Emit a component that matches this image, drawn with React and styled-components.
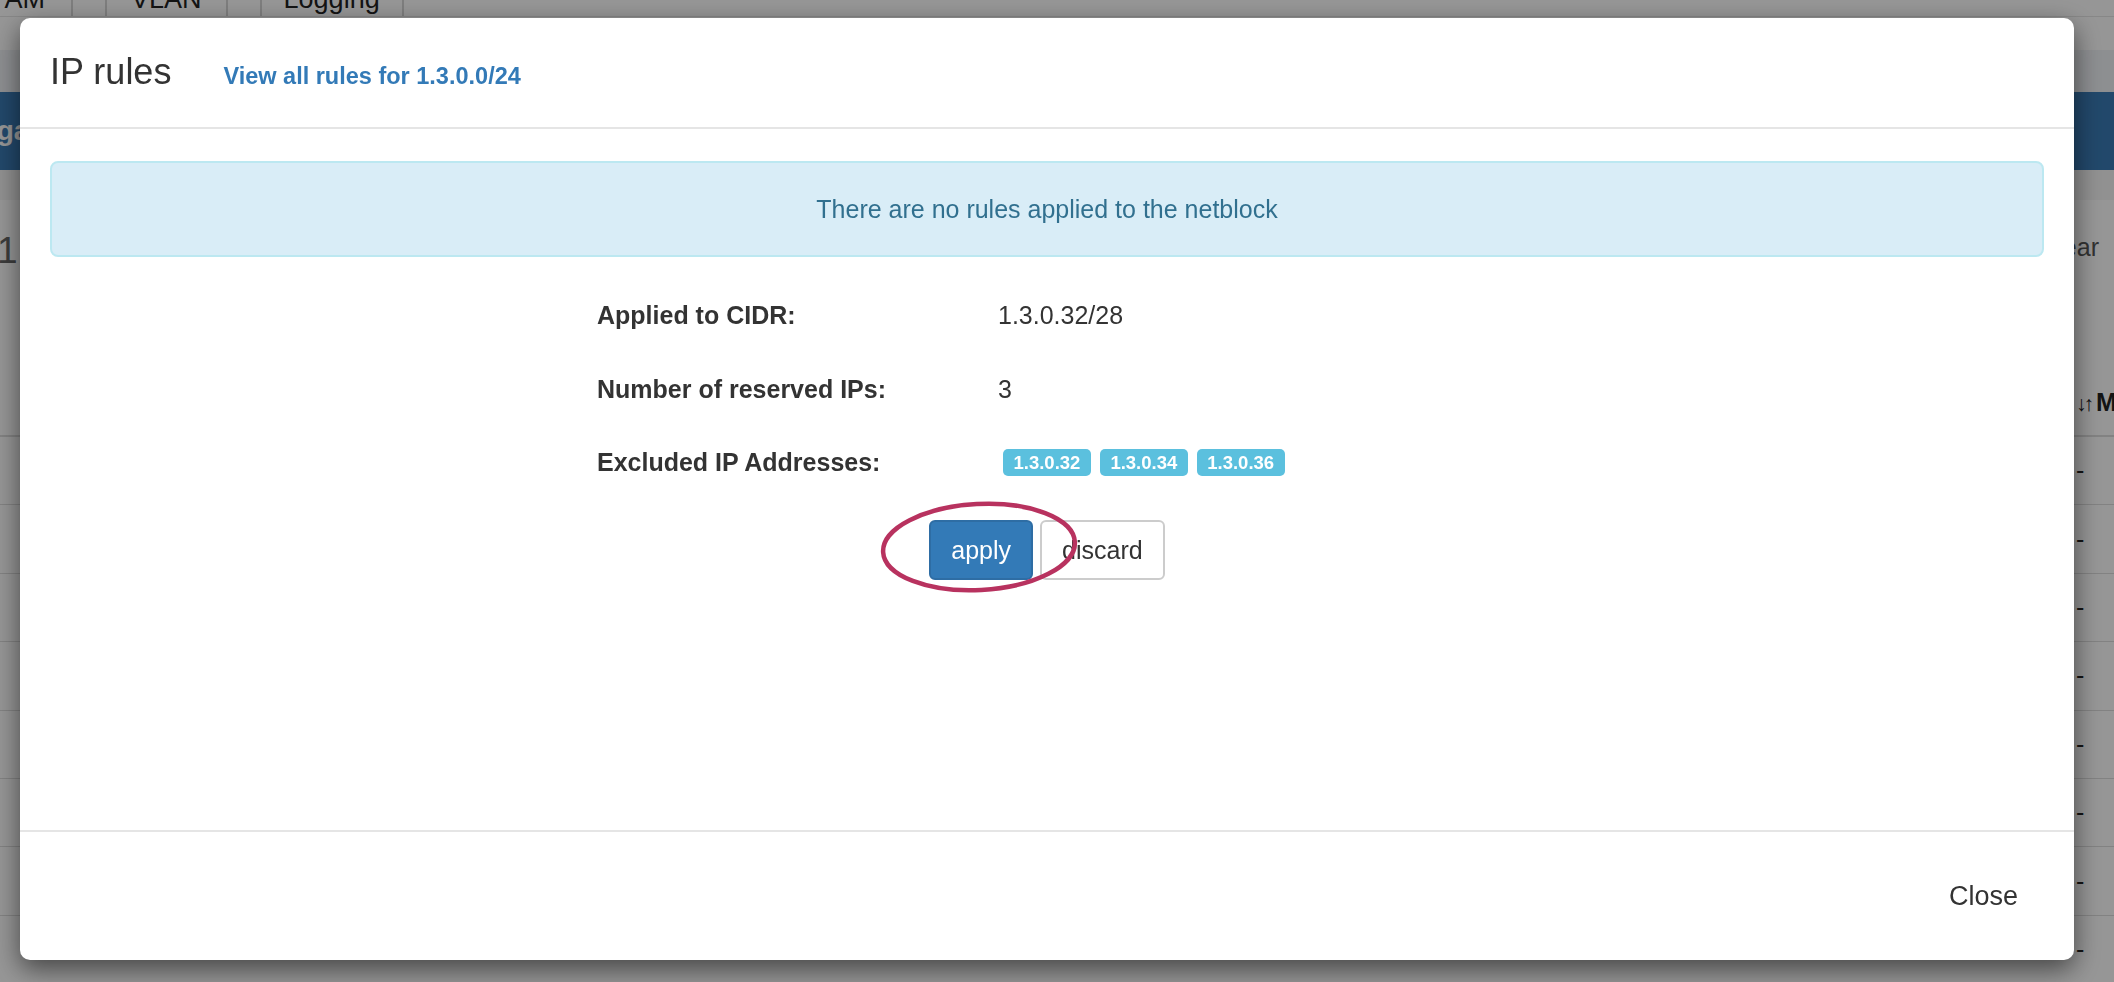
import React from "react";
import styled, { createGlobalStyle } from "styled-components";

const GlobalStyle = createGlobalStyle`
  html, body {
    margin: 0;
    padding: 0;
    width: 100%;
    height: 100%;
    overflow: hidden;
  }
  body {
    font-family: "Liberation Sans", Helvetica, Arial, sans-serif;
    background: #ffffff;
    color: #333333;
  }
  * { box-sizing: border-box; }
`;

/* ---------- background page ---------- */

const Page = styled.div`
  height: 982px;
  overflow: hidden;
  display: flex;
  flex-direction: column;
  background: #ffffff;
`;

const TabStrip = styled.div`
  height: 17px;
  display: flex;
  align-items: flex-start;
  margin-left: -47px;
  border-bottom: 1px solid #e6e6e6;
  overflow: hidden;
  flex-shrink: 0;
`;

const Tab = styled.div`
  height: 17px;
  padding: 0 ${(p) => p.$pad || 26}px;
  margin-right: 32px;
  border-left: 2px solid #d6d6d6;
  border-right: 2px solid #d6d6d6;
  font-size: 27px;
  line-height: 1;
  color: #222222;
  white-space: nowrap;
`;

const TabLabel = styled.span`
  display: block;
  margin-top: -14px;
`;

const SubNav = styled.div`
  height: 75px;
  flex-shrink: 0;
  background: linear-gradient(#ffffff 0 33px, #f0f3f7 33px);
`;

const Banner = styled.div`
  height: 78px;
  flex-shrink: 0;
  background: #3a7bb6;
  color: #ffffff;
  display: flex;
  align-items: center;
  font-size: 28px;
  font-weight: bold;
  white-space: nowrap;
  overflow: hidden;
`;

const BannerText = styled.span`
  margin-left: -36px;
`;

const TitleRow = styled.div`
  height: 130px;
  flex-shrink: 0;
  display: flex;
  justify-content: space-between;
  align-items: flex-start;
  background: linear-gradient(#f6f6f6 0 30px, #ffffff 30px);
`;

const PageHeading = styled.span`
  margin-top: 62px;
  margin-left: -3px;
  font-size: 37px;
  line-height: 1;
  color: #666666;
`;

const ClearLink = styled.span`
  margin-top: 65px;
  margin-right: 15px;
  font-size: 25px;
  line-height: 1;
  color: #555555;
`;

const Spacer = styled.div`
  height: 69px;
  flex-shrink: 0;
`;

const TableRow = styled.div`
  display: grid;
  grid-template-columns: 1fr 38px;
  align-items: center;
  height: ${(p) => (p.$head ? "68px" : "68.4px")};
  flex-shrink: 0;
  border-bottom: ${(p) => (p.$head ? "2px" : "1px")} solid #dddddd;
  font-size: 25px;
  font-weight: ${(p) => (p.$head ? "bold" : "normal")};
  color: #222222;
`;

const TableCell = styled.div`
  white-space: nowrap;
  overflow: hidden;
`;

const SortArrows = styled.span`
  font-size: 21px;
  letter-spacing: -3px;
  margin-right: 5px;
`;

/* ---------- modal ---------- */

const Backdrop = styled.div`
  position: fixed;
  inset: 0;
  background: rgba(0, 0, 0, 0.41);
`;

const Modal = styled.div`
  position: fixed;
  left: 20px;
  top: 18px;
  width: 2054px;
  height: 942px;
  background: #ffffff;
  border-radius: 10px;
  box-shadow: 0 9px 27px rgba(0, 0, 0, 0.55);
  display: flex;
  flex-direction: column;
`;

const ModalHeader = styled.div`
  height: 111px;
  flex-shrink: 0;
  padding: 34px 30px 0;
  border-bottom: 2px solid #e5e5e5;
  display: flex;
  align-items: baseline;
  gap: 52px;
`;

const ModalTitle = styled.h4`
  margin: 0;
  font-size: 36px;
  font-weight: 400;
  line-height: 1.1;
  color: #333333;
`;

const HeaderLink = styled.a`
  font-size: 23.5px;
  font-weight: bold;
  color: #337ab7;
  text-decoration: none;
`;

const ModalBody = styled.div`
  flex: 1;
  padding: 32px 30px 0;
  display: flex;
  flex-direction: column;
`;

const Alert = styled.div`
  height: 96px;
  flex-shrink: 0;
  border: 2px solid #bce8f1;
  background: #d9edf7;
  color: #31708f;
  border-radius: 8px;
  display: flex;
  align-items: center;
  justify-content: center;
  font-size: 25px;
`;

const Form = styled.div`
  width: 900px;
  margin: 22px auto 0;
`;

const FormRow = styled.div`
  display: grid;
  grid-template-columns: 401px 1fr;
  align-items: center;
  height: 73.5px;
  font-size: 25px;
`;

const FieldLabel = styled.span`
  font-weight: bold;
  color: #333333;
`;

const FieldValue = styled.span`
  color: #333333;
`;

const TagList = styled.div`
  display: flex;
  gap: 9px;
  padding-left: 5px;
`;

const Tag = styled.span`
  display: inline-flex;
  align-items: center;
  height: 27px;
  padding: 0 10.5px;
  border-radius: 5px;
  background: #5bc0de;
  color: #ffffff;
  font-size: 18.5px;
  font-weight: bold;
  line-height: 1;
`;

const Actions = styled.div`
  display: flex;
  justify-content: center;
  margin-top: 20.5px;
`;

const ActionGroup = styled.div`
  position: relative;
  display: flex;
  gap: 7px;
`;

const Button = styled.button`
  height: 60px;
  padding: 0 20px;
  font-family: inherit;
  font-size: 25px;
  border-radius: 6px;
  border: 2px solid ${(p) => (p.$primary ? "#2e6da4" : "#cccccc")};
  background: ${(p) => (p.$primary ? "#337ab7" : "#ffffff")};
  color: ${(p) => (p.$primary ? "#ffffff" : "#333333")};
  cursor: pointer;
`;

const Highlight = styled.svg`
  position: absolute;
  left: -55px;
  top: -23px;
  width: 210px;
  height: 100px;
  overflow: visible;
  pointer-events: none;
`;

const ModalFooter = styled.div`
  height: 130px;
  flex-shrink: 0;
  border-top: 2px solid #e5e5e5;
  display: flex;
  align-items: center;
  justify-content: flex-end;
  padding-right: 56px;
`;

const CloseButton = styled.button`
  border: none;
  background: none;
  padding: 0;
  font-family: inherit;
  font-size: 27px;
  color: #333333;
  cursor: pointer;
`;

const rows = [
  { label: "Applied to CIDR:", value: "1.3.0.32/28" },
  { label: "Number of reserved IPs:", value: "3" },
];

const excluded = ["1.3.0.32", "1.3.0.34", "1.3.0.36"];

const tabs = [
  { name: "IPAM", pad: 26 },
  { name: "VLAN", pad: 24 },
  { name: "Logging", pad: 22 },
];

export default function App() {
  return (
    <>
      <GlobalStyle />
      <Page>
        <TabStrip>
          {tabs.map((t) => (
            <Tab key={t.name} $pad={t.pad}>
              <TabLabel>{t.name}</TabLabel>
            </Tab>
          ))}
        </TabStrip>
        <SubNav />
        <Banner>
          <BannerText>Organization</BannerText>
        </Banner>
        <TitleRow>
          <PageHeading>1.3.0.0/24</PageHeading>
          <ClearLink>Clear</ClearLink>
        </TitleRow>
        <Spacer />
        <TableRow $head>
          <TableCell />
          <TableCell>
            <SortArrows>↓↑</SortArrows>Mask
          </TableCell>
        </TableRow>
        {Array.from({ length: 8 }).map((_, i) => (
          <TableRow key={i}>
            <TableCell />
            <TableCell>-</TableCell>
          </TableRow>
        ))}
      </Page>

      <Backdrop />

      <Modal>
        <ModalHeader>
          <ModalTitle>IP rules</ModalTitle>
          <HeaderLink href="#">View all rules for 1.3.0.0/24</HeaderLink>
        </ModalHeader>
        <ModalBody>
          <Alert>There are no rules applied to the netblock</Alert>
          <Form>
            {rows.map((r) => (
              <FormRow key={r.label}>
                <FieldLabel>{r.label}</FieldLabel>
                <FieldValue>{r.value}</FieldValue>
              </FormRow>
            ))}
            <FormRow>
              <FieldLabel>Excluded IP Addresses:</FieldLabel>
              <TagList>
                {excluded.map((ip) => (
                  <Tag key={ip}>{ip}</Tag>
                ))}
              </TagList>
            </FormRow>
          </Form>
          <Actions>
            <ActionGroup>
              <Button $primary>apply</Button>
              <Button>discard</Button>
              <Highlight viewBox="0 0 210 100">
                <ellipse
                  cx="105"
                  cy="50"
                  rx="96"
                  ry="43"
                  fill="none"
                  stroke="#b8325f"
                  strokeWidth="4.5"
                  transform="rotate(-3 105 50)"
                />
              </Highlight>
            </ActionGroup>
          </Actions>
        </ModalBody>
        <ModalFooter>
          <CloseButton>Close</CloseButton>
        </ModalFooter>
      </Modal>
    </>
  );
}
